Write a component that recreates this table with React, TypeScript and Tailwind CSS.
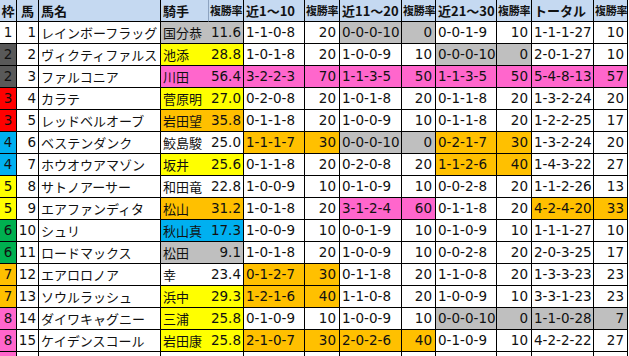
import { Fragment } from "react";

const WAKU: Record<number, string> = {
  1: "bg-white",
  2: "bg-[#595959]",
  3: "bg-[#FF0000]",
  4: "bg-[#00B0F0]",
  5: "bg-[#FFFF00]",
  6: "bg-[#00B050]",
  7: "bg-[#FFC000]",
  8: "bg-[#FF66CC]",
};

const BG: Record<string, string> = {
  w: "bg-white",
  g: "bg-[#BFBFBF]",
  y: "bg-[#FFFF00]",
  p: "bg-[#FF66CC]",
  o: "bg-[#FFC000]",
  b: "bg-[#00B0F0]",
};

type Period = [string, string, string];

type Row = {
  waku: number;
  no: number;
  name: string;
  jockey: string;
  jc: string;
  jr: string;
  p: Period[];
};

const ROWS: Row[] = [
  { waku: 1, no: 1, name: "レインボーフラッグ", jockey: "国分恭", jc: "g", jr: "11.6", p: [["1-1-0-8", "20", "w"], ["0-0-0-10", "0", "g"], ["0-0-1-9", "10", "w"], ["1-1-1-27", "10", "w"]] },
  { waku: 2, no: 2, name: "ヴィクティファルス", jockey: "池添", jc: "y", jr: "28.8", p: [["1-0-1-8", "20", "w"], ["1-0-0-9", "10", "w"], ["0-0-0-10", "0", "g"], ["2-0-1-27", "10", "w"]] },
  { waku: 2, no: 3, name: "ファルコニア", jockey: "川田", jc: "p", jr: "56.4", p: [["3-2-2-3", "70", "p"], ["1-1-3-5", "50", "p"], ["1-1-3-5", "50", "p"], ["5-4-8-13", "57", "p"]] },
  { waku: 3, no: 4, name: "カラテ", jockey: "菅原明", jc: "y", jr: "27.0", p: [["0-2-0-8", "20", "w"], ["1-0-1-8", "20", "w"], ["0-1-1-8", "20", "w"], ["1-3-2-24", "20", "w"]] },
  { waku: 3, no: 5, name: "レッドベルオーブ", jockey: "岩田望", jc: "o", jr: "35.8", p: [["0-1-1-8", "20", "w"], ["1-0-0-9", "10", "w"], ["0-1-1-8", "20", "w"], ["1-2-2-25", "17", "w"]] },
  { waku: 4, no: 6, name: "ベステンダンク", jockey: "鮫島駿", jc: "w", jr: "25.0", p: [["1-1-1-7", "30", "o"], ["0-0-0-10", "0", "g"], ["0-2-1-7", "30", "o"], ["1-3-2-24", "20", "w"]] },
  { waku: 4, no: 7, name: "ホウオウアマゾン", jockey: "坂井", jc: "y", jr: "25.6", p: [["0-1-1-8", "20", "w"], ["0-2-0-8", "20", "w"], ["1-1-2-6", "40", "o"], ["1-4-3-22", "27", "w"]] },
  { waku: 5, no: 8, name: "サトノアーサー", jockey: "和田竜", jc: "w", jr: "22.8", p: [["1-0-0-9", "10", "w"], ["0-1-0-9", "10", "w"], ["0-0-2-8", "20", "w"], ["1-1-2-26", "13", "w"]] },
  { waku: 5, no: 9, name: "エアファンディタ", jockey: "松山", jc: "o", jr: "31.2", p: [["1-0-1-8", "20", "w"], ["3-1-2-4", "60", "p"], ["0-1-1-8", "20", "w"], ["4-2-4-20", "33", "o"]] },
  { waku: 6, no: 10, name: "シュリ", jockey: "秋山真", jc: "b", jr: "17.3", p: [["1-0-0-9", "10", "w"], ["0-0-1-9", "10", "w"], ["0-1-0-9", "10", "w"], ["1-1-1-27", "10", "w"]] },
  { waku: 6, no: 11, name: "ロードマックス", jockey: "松田", jc: "g", jr: "9.1", p: [["1-0-1-8", "20", "w"], ["1-0-0-9", "10", "w"], ["0-0-2-8", "20", "w"], ["2-0-3-25", "17", "w"]] },
  { waku: 7, no: 12, name: "エアロロノア", jockey: "幸", jc: "w", jr: "23.4", p: [["0-1-2-7", "30", "o"], ["0-1-1-8", "20", "w"], ["1-1-0-8", "20", "w"], ["1-3-3-23", "23", "w"]] },
  { waku: 7, no: 13, name: "ソウルラッシュ", jockey: "浜中", jc: "y", jr: "29.3", p: [["1-2-1-6", "40", "o"], ["1-1-0-8", "20", "w"], ["1-0-0-9", "10", "w"], ["3-3-1-23", "23", "w"]] },
  { waku: 8, no: 14, name: "ダイワキャグニー", jockey: "三浦", jc: "y", jr: "25.8", p: [["0-1-0-9", "10", "w"], ["1-0-0-9", "10", "w"], ["0-0-0-10", "0", "g"], ["1-1-0-28", "7", "g"]] },
  { waku: 8, no: 15, name: "ケイデンスコール", jockey: "岩田康", jc: "y", jr: "25.8", p: [["2-1-0-7", "30", "o"], ["2-0-2-6", "40", "o"], ["0-1-0-9", "10", "w"], ["4-2-2-22", "27", "w"]] },
  // next row is cut off at the bottom edge, only its colours show
  { waku: 8, no: 16, name: "", jockey: "", jc: "w", jr: "", p: [["", "", "w"], ["", "", "w"], ["", "", "w"], ["", "", "w"]] },
];

const HEAD = ["近1～10", "近11～20", "近21～30", "トータル"];

const cell = "h-[22px] border-r border-b border-black flex items-center overflow-hidden whitespace-nowrap";
const num = "font-['DejaVu_Sans',sans-serif] text-[13.5px]";
const jp = "font-['Noto_Sans_CJK_JP',sans-serif] text-[13px]";
const head = "h-[22px] border-r border-b border-black bg-[#C5D9F1] flex items-center overflow-hidden whitespace-nowrap font-['Noto_Sans_CJK_JP',sans-serif] font-bold text-[13px] px-[2px]";
const rateHead = "h-[22px] border-r border-b border-black bg-[#C5D9F1] flex items-center overflow-hidden whitespace-nowrap font-['Noto_Sans_CJK_JP',sans-serif] font-bold text-[11px] tracking-[-0.3px] pl-[1px]";

export default function App() {
  return (
    <div className="w-[629px] h-[356px] overflow-hidden bg-white text-[#111]">
      <div className="grid grid-cols-[17px_22px_122px_48px_35px_61px_35px_62px_34px_61px_35px_62px_34px]">
        <div className={`${head} justify-center`}>枠</div>
        <div className={`${head} justify-center`}>馬</div>
        <div className={head}>馬名</div>
        <div className={`${head} border-r-[#8DA3C0]`}>騎手</div>
        <div className={rateHead}>複勝率</div>
        {HEAD.map((h) => (
          <Fragment key={h}>
            <div className={head}>{h}</div>
            <div className={rateHead}>複勝率</div>
          </Fragment>
        ))}

        {ROWS.map((r) => (
          <Fragment key={r.no}>
            <div className={`${cell} ${WAKU[r.waku]} ${num} justify-center`}>{r.name ? r.waku : ""}</div>
            <div className={`${cell} ${num} justify-end pr-[2px]`}>{r.name ? r.no : ""}</div>
            <div className={`${cell} ${jp} pl-[2px]`}>{r.name}</div>
            <div className={`h-[22px] border-b border-black flex items-center overflow-hidden whitespace-nowrap ${BG[r.jc]} ${jp} pl-[2px]`}>{r.jockey}</div>
            <div className={`${cell} ${BG[r.jc]} ${num} justify-end pr-[2px]`}>{r.jr}</div>
            {r.p.map((p, i) => (
              <Fragment key={i}>
                <div className={`${cell} ${BG[p[2]]} ${num} pl-[2px]`}>{p[0]}</div>
                <div className={`${cell} ${BG[p[2]]} ${num} justify-end pr-[3px]`}>{p[1]}</div>
              </Fragment>
            ))}
          </Fragment>
        ))}
      </div>
    </div>
  );
}
